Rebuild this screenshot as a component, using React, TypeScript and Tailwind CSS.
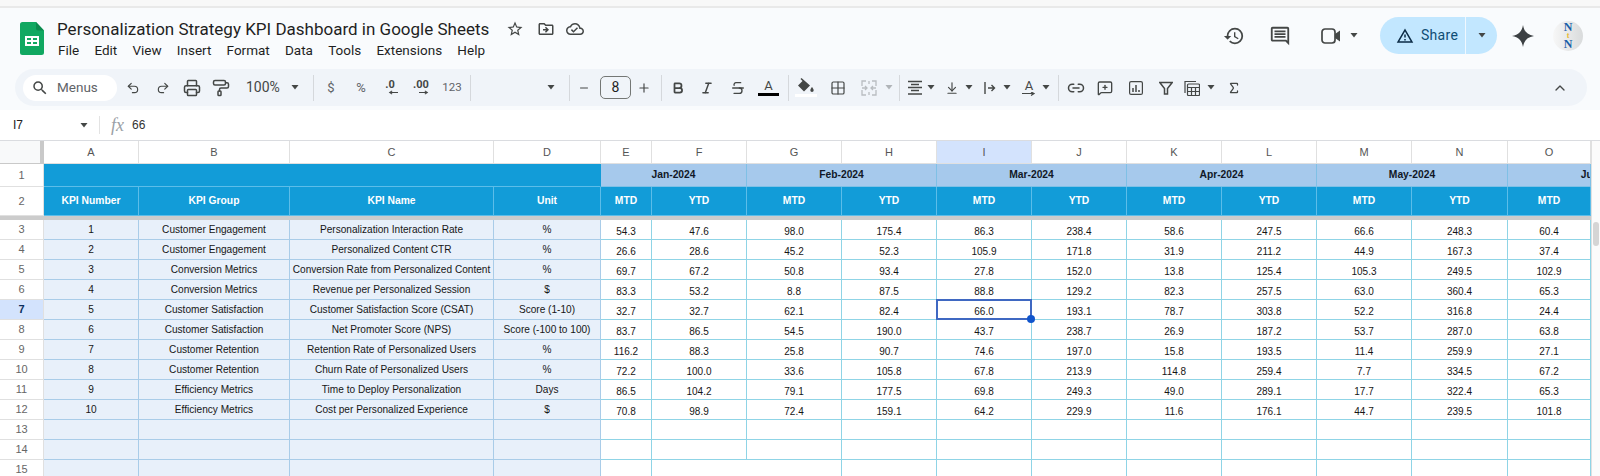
import React from "react";
import { Undo2, Redo2, Printer, PaintRoller, Minus, Plus, Bold, Italic, Strikethrough, Grid2x2, ArrowDownToLine, Link2, MessageSquarePlus, Sigma, ChevronUp } from "lucide-react";

const rows: [number, string, string, string, number[]][] = [
  [1, "Customer Engagement", "Personalization Interaction Rate", "%", [54.3, 47.6, 98.0, 175.4, 86.3, 238.4, 58.6, 247.5, 66.6, 248.3, 60.4]],
  [2, "Customer Engagement", "Personalized Content CTR", "%", [26.6, 28.6, 45.2, 52.3, 105.9, 171.8, 31.9, 211.2, 44.9, 167.3, 37.4]],
  [3, "Conversion Metrics", "Conversion Rate from Personalized Content", "%", [69.7, 67.2, 50.8, 93.4, 27.8, 152.0, 13.8, 125.4, 105.3, 249.5, 102.9]],
  [4, "Conversion Metrics", "Revenue per Personalized Session", "$", [83.3, 53.2, 8.8, 87.5, 88.8, 129.2, 82.3, 257.5, 63.0, 360.4, 65.3]],
  [5, "Customer Satisfaction", "Customer Satisfaction Score (CSAT)", "Score (1-10)", [32.7, 32.7, 62.1, 82.4, 66.0, 193.1, 78.7, 303.8, 52.2, 316.8, 24.4]],
  [6, "Customer Satisfaction", "Net Promoter Score (NPS)", "Score (-100 to 100)", [83.7, 86.5, 54.5, 190.0, 43.7, 238.7, 26.9, 187.2, 53.7, 287.0, 63.8]],
  [7, "Customer Retention", "Retention Rate of Personalized Users", "%", [116.2, 88.3, 25.8, 90.7, 74.6, 197.0, 15.8, 193.5, 11.4, 259.9, 27.1]],
  [8, "Customer Retention", "Churn Rate of Personalized Users", "%", [72.2, 100.0, 33.6, 105.8, 67.8, 213.9, 114.8, 259.4, 7.7, 334.5, 67.2]],
  [9, "Efficiency Metrics", "Time to Deploy Personalization", "Days", [86.5, 104.2, 79.1, 177.5, 69.8, 249.3, 49.0, 289.1, 17.7, 322.4, 65.3]],
  [10, "Efficiency Metrics", "Cost per Personalized Experience", "$", [70.8, 98.9, 72.4, 159.1, 64.2, 229.9, 11.6, 176.1, 44.7, 239.5, 101.8]],
];
const letters = ["A", "B", "C", "D", "E", "F", "G", "H", "I", "J", "K", "L", "M", "N", "O"];
const months = ["Jan-2024", "Feb-2024", "Mar-2024", "Apr-2024", "May-2024"];

const colHead = "flex items-center justify-center border-r border-b border-[#e0e0e0] text-[11px] text-[#555]";
const rowHead = "flex items-center justify-center border-r border-b border-[#e0e0e0] text-[11px] text-[#666] bg-white";
const blue = "flex items-center justify-center border-r border-b border-[#5cbde9] bg-[#129cd8] text-white font-bold text-[10.3px]";
const month = "flex items-center justify-center border-r border-b border-[#7fc0e6] bg-[#a6c9ec] text-[#111827] font-bold text-[10.3px]";
const kpi = "flex items-center justify-center border-r border-b border-[#a9cce8] bg-[#e8f0fa] text-[#161616] text-[10.1px] whitespace-nowrap";
const data = "relative flex items-center justify-center pt-[3px] border-r border-b border-[#8fd4e6] bg-white text-[#161616] text-[10px]";
const icon = "shrink-0 text-[#444746]";
const sep = "shrink-0 w-px h-[26px] bg-[#d5d8dc]";

function Caret({ className = "", light = false }: { className?: string; light?: boolean }) {
  return (
    <svg viewBox="0 0 10 5" className={`shrink-0 w-[10px] h-[5px] ${className}`}>
      <path d="M1.5 0h7L5 4.5z" fill={light ? "#b0b4b8" : "#444746"} />
    </svg>
  );
}

function M({ d, className }: { d: string; className: string }) {
  return (
    <svg viewBox="0 0 24 24" className={className} fill="currentColor">
      <path d={d} />
    </svg>
  );
}

export default function App() {
  return (
    <div className="w-[1600px] h-[476px] overflow-hidden flex flex-col bg-white font-['Liberation_Sans',sans-serif]">
      <div className="h-[8px] shrink-0 bg-[#f8f8f8] border-b-2 border-[#e9e9e9]" />

      {/* Title bar */}
      <div className="h-[61px] shrink-0 flex bg-[#f9fbfd] pl-[20px] font-['Roboto',sans-serif]">
        <svg viewBox="0 0 24 33" className="shrink-0 w-[24px] h-[33px] mt-[14px]">
          <path d="M2.5 0H16l8 8.5V30.5a2.5 2.5 0 0 1-2.5 2.5h-19A2.5 2.5 0 0 1 0 30.5V2.5A2.5 2.5 0 0 1 2.5 0z" fill="#11a861" />
          <path d="M16 0l8 8.5h-6a2 2 0 0 1-2-2z" fill="#0c8a4e" />
          <path d="M5 14h14v10H5zM7 16v2h4v-2zm6 0v2h4v-2zm-6 4v2h4v-2zm6 0v2h4v-2z" fill="#fff" fillRule="evenodd" />
        </svg>
        <div className="ml-[13px] flex flex-col">
          <div className="mt-[9px] h-[24px] flex items-center">
            <span className="text-[17px] leading-[24px] text-[#1f1f1f] whitespace-nowrap">Personalization Strategy KPI Dashboard in Google Sheets</span>
            <M className={`${icon} ml-[17px] w-[18px] h-[18px]`} d="M22 9.24l-7.19-.62L12 2 9.19 8.63 2 9.24l5.46 4.73L5.82 21 12 17.27 18.18 21l-1.63-7.03L22 9.24zM12 15.4l-3.76 2.27 1-4.28-3.32-2.88 4.38-.38L12 6.1l1.71 4.04 4.38.38-3.32 2.88 1 4.28L12 15.4z" />
            <M className={`${icon} ml-[13px] w-[18px] h-[18px]`} d="M20 6h-8l-2-2H4c-1.1 0-2 .9-2 2v12c0 1.1.9 2 2 2h16c1.1 0 2-.9 2-2V8c0-1.1-.9-2-2-2zm0 12H4V6h5.17l2 2H20v10zm-8.01-9l-1.41 1.41L12.16 12H8v2h4.16l-1.59 1.59L11.99 17 16 13.01 11.99 9z" />
            <M className={`${icon} ml-[11px] w-[18px] h-[18px]`} d="M19.35 10.04C18.67 6.59 15.64 4 12 4 9.11 4 6.6 5.64 5.35 8.04 2.34 8.36 0 10.91 0 14c0 3.31 2.69 6 6 6h13c2.76 0 5-2.24 5-5 0-2.64-2.05-4.78-4.65-4.96zM19 18H6c-2.21 0-4-1.79-4-4 0-2.05 1.53-3.76 3.56-3.97l1.07-.11.5-.95C8.08 7.14 9.94 6 12 6c2.62 0 4.88 1.86 5.39 4.43l.3 1.5 1.53.11c1.56.1 2.78 1.41 2.78 2.96 0 1.65-1.35 3-3 3zm-9-3.82l-2.09-2.09L6.5 13.5 10 17l6.01-6.01-1.41-1.41z" />
          </div>
          <div className="h-[18px] pl-[1px] flex items-center gap-[15.2px] text-[13.5px] text-[#1f1f1f]">
            {["File", "Edit", "View", "Insert", "Format", "Data", "Tools", "Extensions", "Help"].map((m) => (
              <span key={m}>{m}</span>
            ))}
          </div>
        </div>
        <div className="ml-auto mt-[9px] h-[37px] pr-[17px] flex items-center">
          <M className={`${icon} w-[22px] h-[22px]`} d="M13 3a9 9 0 0 0-9 9H1l3.89 3.89.07.14L9 12H6c0-3.87 3.13-7 7-7s7 3.13 7 7-3.13 7-7 7c-1.93 0-3.68-.79-4.94-2.06l-1.42 1.42A8.954 8.954 0 0 0 13 21a9 9 0 0 0 0-18zm-1 5v5l4.28 2.54.72-1.21-3.5-2.08V8H12z" />
          <M className={`${icon} ml-[24px] w-[22px] h-[22px]`} d="M21.99 4c0-1.1-.89-2-1.99-2H4c-1.1 0-2 .9-2 2v12c0 1.1.9 2 2 2h14l4 4-.01-18zM20 4v13.17L18.83 16H4V4h16zM6 12h12v2H6zm0-3h12v2H6zm0-3h12v2H6z" />
          <svg viewBox="0 0 20 16" className="shrink-0 ml-[30px] w-[20px] h-[16px]">
            <rect x="1" y="1" width="13" height="14" rx="3" fill="none" stroke="#444746" strokeWidth="1.7" />
            <path d="M14 6l5-3.500v11L14 10z" fill="#444746" />
          </svg>
          <Caret className="ml-[8px] w-[8px]" />
          <div className="ml-[21px] w-[117px] h-[37px] flex items-center rounded-full bg-[#c2e7ff]">
            <div className="w-[86px] h-full flex items-center pl-[16px] border-r border-[#f0f8ff]">
              <M className="shrink-0 w-[18px] h-[18px] text-[#0b2b45]" d="M12 5.99L19.53 19H4.47L12 5.99M12 2L1 21h22L12 2zm1 14h-2v2h2v-2zm0-6h-2v4h2v-4z" />
              <span className="ml-[7px] text-[14px] tracking-[0.3px] text-[#0f4d74]">Share</span>
            </div>
            <div className="flex-1 flex justify-center">
              <Caret />
            </div>
          </div>
          <svg viewBox="0 0 22 22" className="shrink-0 ml-[15px] w-[22px] h-[22px]">
            <path d="M11 0C12 6.5 15.5 10 22 11 15.5 12 12 15.5 11 22 10 15.5 6.500 12 0 11 6.500 10 10 6.500 11 0z" fill="#3c4043" />
          </svg>
          <div className="shrink-0 ml-[19px] w-[30px] h-[30px] rounded-full bg-gradient-to-r from-[#f7f7f7] to-[#d9dbdc] flex flex-col items-center justify-center font-['Liberation_Serif',serif] font-bold">
            <span className="text-[12px] leading-[10px] text-[#1b5fa8]">N</span>
            <span className="text-[8px] leading-[7px] text-[#e8b92f]">t</span>
            <span className="text-[12px] leading-[10px] text-[#1b5fa8]">N</span>
          </div>
        </div>
      </div>

      {/* Toolbar */}
      <div className="h-[41px] shrink-0 bg-[#f9fbfd] pl-[15px] pr-[13px]">
        <div className="h-[37px] rounded-full bg-[#f0f4f9] flex items-center pl-[8px] pr-[19px] text-[#444746]">
          <div className="shrink-0 w-[94px] h-[26px] rounded-full bg-white flex items-center pl-[8px] font-['Roboto',sans-serif]">
            <M className={`${icon} w-[18px] h-[18px]`} d="M15.500 14h-.79l-.28-.27A6.471 6.471 0 0 0 16 9.500 6.500 6.500 0 1 0 9.500 16c1.610 0 3.090-.59 4.230-1.570l.27.28v.79l5 4.990L20.490 19l-4.990-5zm-6 0C7.010 14 5 11.990 5 9.500S7.010 5 9.500 5 14 7.010 14 9.500 11.990 14 9.500 14z" />
            <span className="ml-[8px] text-[13.5px] text-[#5f6368]">Menus</span>
          </div>
          <Undo2 className={`${icon} ml-[9px] w-[14px] h-[14px]`} />
          <Redo2 className={`${icon} ml-[16px] w-[14px] h-[14px]`} />
          <Printer className={`${icon} ml-[13px] w-[18px] h-[18px]`} />
          <PaintRoller className={`${icon} ml-[11px] w-[18px] h-[18px]`} />
          <span className="shrink-0 ml-[16px] w-[34px] text-[14px] whitespace-nowrap font-['Roboto',sans-serif]">100%</span>
          <Caret className="ml-[10px]" />
          <div className={`${sep} ml-[13px]`} />
          <span className="shrink-0 ml-[12px] w-[10px] text-center text-[13px] text-[#5f6368] font-['Roboto',sans-serif]">$</span>
          <span className="shrink-0 ml-[18px] w-[14px] text-center text-[13px] text-[#5f6368] font-['Roboto',sans-serif]">%</span>
          <div className="shrink-0 ml-[13px] w-[18px] flex flex-col items-center font-['Roboto',sans-serif] font-bold">
            <span className="text-[11px] leading-[10px]">.0</span>
            <svg viewBox="0 0 12 5" className="w-[10px] h-[5px] ml-[6px]"><path d="M12 2.500H3M5 .5 2 2.500 5 4.500" fill="none" stroke="#444746" strokeWidth="1.300" /></svg>
          </div>
          <div className="shrink-0 ml-[11px] w-[22px] flex flex-col items-center font-['Roboto',sans-serif] font-bold">
            <span className="text-[11px] leading-[10px]">.00</span>
            <svg viewBox="0 0 12 5" className="w-[10px] h-[5px] ml-[6px]"><path d="M0 2.500H9M7 .5 10 2.500 7 4.500" fill="none" stroke="#444746" strokeWidth="1.300" /></svg>
          </div>
          <span className="shrink-0 ml-[9px] w-[22px] text-center text-[11.5px] text-[#5f6368] font-['Roboto',sans-serif]">123</span>
          <div className={`${sep} ml-[7px]`} />
          <Caret className="ml-[75px]" />
          <div className={`${sep} ml-[13px]`} />
          <Minus className={`${icon} ml-[8px] w-[12px] h-[12px]`} />
          <div className="shrink-0 ml-[10px] w-[31px] h-[23px] rounded-[5px] border border-[#747775] flex items-center justify-center text-[14px] text-[#1f1f1f] font-['Roboto',sans-serif]">8</div>
          <Plus className={`${icon} ml-[6px] w-[14px] h-[14px]`} />
          <div className={`${sep} ml-[10px]`} />
          <Bold className={`${icon} ml-[9px] w-[14px] h-[14px]`} strokeWidth={3} />
          <Italic className={`${icon} ml-[15px] w-[14px] h-[14px]`} strokeWidth={2.5} />
          <Strikethrough className={`${icon} ml-[16px] w-[16px] h-[16px]`} />
          <div className="shrink-0 ml-[12px] w-[21px] flex flex-col items-center">
            <span className="text-[13px] leading-[13px] text-[#444746] font-['Roboto',sans-serif]">A</span>
            <div className="mt-[1px] w-[21px] h-[3px] bg-black" />
          </div>
          <div className={`${sep} ml-[9px]`} />
          <div className="shrink-0 ml-[8px] w-[18px] flex flex-col items-center">
            <svg viewBox="0 0 18 15" className="w-[18px] h-[15px]">
              <path d="M4.500 0 3.500 1l2 2L1 7.500 7 13.500l6-6zM15 9s-1.700 2-1.700 3.200a1.700 1.700 0 0 0 3.400 0C16.700 11 15 9 15 9z" fill="#444746" />
            </svg>
            <div className="mt-[1px] w-[22px] h-[3px] shrink-0 bg-white" />
          </div>
          <Grid2x2 className={`${icon} ml-[15px] w-[16px] h-[16px]`} strokeWidth={1.8} />
          <svg viewBox="0 0 16 16" className="shrink-0 ml-[15px] w-[16px] h-[16px]" fill="none" stroke="#b9bdc1" strokeWidth="1.300">
            <path d="M5 1H1v5M1 10v5h4M11 1h4v5M15 10v5h-4M1 8h5M4 6l2 2-2 2M15 8h-5M12 6l-2 2 2 2M8 1v3M8 12v3" />
          </svg>
          <Caret light className="ml-[7px]" />
          <div className={`${sep} ml-[5px]`} />
          <svg viewBox="0 0 16 16" className="shrink-0 ml-[7px] w-[16px] h-[16px]" stroke="#444746" strokeWidth="1.300">
            <path d="M1 1.500h14M4 4.500h8M1 7.500h14M4 10.500h8M1 14h14" />
          </svg>
          <Caret className="ml-[3px]" />
          <ArrowDownToLine className={`${icon} ml-[9px] w-[14px] h-[14px]`} strokeWidth={2} />
          <Caret className="ml-[5px]" />
          <svg viewBox="0 0 14 14" className="shrink-0 ml-[10px] w-[14px] h-[14px]" fill="none" stroke="#444746" strokeWidth="1.400">
            <path d="M1 1v12M4 7h6M7.500 4l3 3-3 3" />
          </svg>
          <Caret className="ml-[4px]" />
          <div className="shrink-0 ml-[10px] w-[14px] flex flex-col items-center">
            <span className="text-[13px] leading-[13px] text-[#444746] font-['Roboto',sans-serif]">A</span>
            <svg viewBox="0 0 14 4" className="w-[14px] h-[4px]"><path d="M0 1.500h11M9 0l3 1.500L9 3.500" fill="none" stroke="#444746" strokeWidth="1.200" /></svg>
          </div>
          <Caret className="ml-[5px]" />
          <div className={`${sep} ml-[7px]`} />
          <Link2 className={`${icon} ml-[8px] w-[18px] h-[18px]`} />
          <MessageSquarePlus className={`${icon} ml-[12px] w-[16px] h-[16px]`} />
          <svg viewBox="0 0 14 14" className="shrink-0 ml-[16px] w-[14px] h-[14px]" fill="none" stroke="#444746" strokeWidth="1.200">
            <rect x=".6" y=".6" width="12.800" height="12.800" rx="1.500" />
            <path d="M4 7v4M7 4v7M10 9v2" strokeWidth="1.500" />
          </svg>
          <svg viewBox="0 0 14 14" className="shrink-0 ml-[16px] w-[14px] h-[14px]" fill="none" stroke="#444746" strokeWidth="1.500">
            <path d="M.8 1.500h12.400L8.500 7.500V13H5.500V7.500z" />
          </svg>
          <svg viewBox="0 0 16 16" className="shrink-0 ml-[11px] w-[16px] h-[16px]" fill="none" stroke="#444746" strokeWidth="1.200">
            <path d="M1 13V1.500h11" />
            <rect x="3.500" y="4" width="12" height="11.500" rx="1" />
            <path d="M3.500 7.500h12M3.500 11.500h12M7.500 7.500v8M11.500 7.500v8" />
          </svg>
          <Caret className="ml-[6px]" />
          <Sigma className={`${icon} ml-[11px] w-[14px] h-[14px]`} strokeWidth={2.2} />
          <ChevronUp className={`${icon} ml-auto w-[16px] h-[16px]`} strokeWidth={2} />
        </div>
      </div>

      {/* Formula bar */}
      <div className="h-[31px] shrink-0 flex items-center bg-white border-b border-[#dadce0]">
        <span className="ml-[13px] w-[66px] text-[12px] text-[#222]">I7</span>
        <Caret />
        <div className="ml-[10px] w-px h-[18px] bg-[#e3e3e3]" />
        <span className="ml-[11px] text-[18px] leading-[20px] italic text-[#9aa0a6] font-['Liberation_Serif',serif]">fx</span>
        <span className="ml-[8px] text-[12px] text-[#333]">66</span>
      </div>

      {/* Sheet */}
      <div className="flex-1 min-h-0 flex overflow-hidden">
        <div className="w-[1591px] shrink-0 grid grid-cols-[44px_95px_151px_204px_107px_51px_95px_95px_95px_95px_95px_95px_95px_95px_96px_83px] grid-rows-[23px_23px_29px_4px_20px_20px_20px_20px_20px_20px_20px_20px_20px_20px_20px_20px_20px] overflow-hidden">
          <div className="border-r-4 border-b border-[#c9c9c9] bg-[#f8f9fa]" />
          {letters.map((l) => (
            <div key={l} className={l === "I" ? `${colHead} bg-[#d3e3fd]` : `${colHead} bg-white`}>{l}</div>
          ))}

          <div className={rowHead}>1</div>
          <div className={`${blue} col-span-4 border-r-[#129cd8]`} />
          {months.map((m) => (
            <div key={m} className={`${month} col-span-2`}>{m}</div>
          ))}
          <div className={`${month} justify-start overflow-hidden`}>
            <span className="shrink-0 w-[190px] text-center whitespace-nowrap">Jun-2024</span>
          </div>

          <div className={rowHead}>2</div>
          {["KPI Number", "KPI Group", "KPI Name", "Unit"].map((h) => (
            <div key={h} className={blue}>{h}</div>
          ))}
          {letters.slice(4).map((l, i) => (
            <div key={l} className={blue}>{i % 2 === 0 ? "MTD" : "YTD"}</div>
          ))}

          <div className="col-span-full bg-[#cccccc]" />

          {rows.map(([n, g, name, u, vals], r) => (
            <React.Fragment key={n}>
              <div className={r === 4 ? `${rowHead} !bg-[#d3e3fd] !text-[#0b2f5c] font-bold` : rowHead}>{r + 3}</div>
              <div className={kpi}>{n}</div>
              <div className={kpi}>{g}</div>
              <div className={kpi}>{name}</div>
              <div className={kpi}>{u}</div>
              {vals.map((v, c) => (
                <div key={c} className={data}>
                  {v.toFixed(1)}
                  {r === 4 && c === 4 && (
                    <div className="absolute z-10 -left-px -top-px -right-px -bottom-px border-2 border-[#3f68c2]">
                      <div className="absolute -right-[5px] -bottom-[5px] w-[8px] h-[8px] rounded-full bg-[#1155cc]" />
                    </div>
                  )}
                </div>
              ))}
            </React.Fragment>
          ))}

          {[13, 14, 15].map((n) => (
            <React.Fragment key={n}>
              <div className={rowHead}>{n}</div>
              <div className={kpi} />
              <div className={kpi} />
              <div className={kpi} />
              <div className={kpi} />
              {letters.slice(4).map((l) => (
                <div key={l} className={n === 15 && l === "F" ? `${data} border-r-white` : data} />
              ))}
            </React.Fragment>
          ))}
        </div>

        <div className="flex-1 flex flex-col border-l border-[#e0e0e0] bg-[#fbfbfb]">
          <div className="h-[81px] shrink-0" />
          <div className="ml-[1px] w-[6px] h-[24px] rounded-full bg-[#d5d5d5]" />
        </div>
      </div>
    </div>
  );
}
